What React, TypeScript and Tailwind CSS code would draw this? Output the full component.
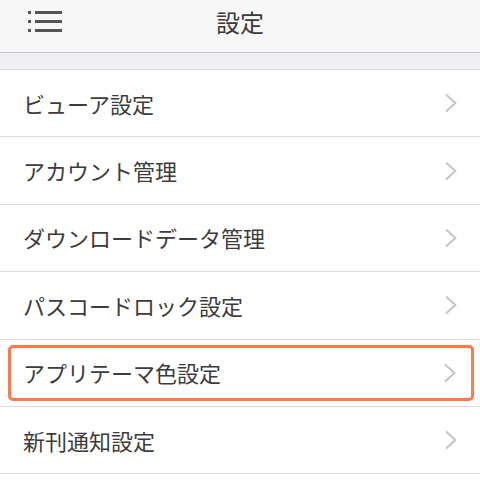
import React from "react";

const items = [
  "ビューア設定",
  "アカウント管理",
  "ダウンロードデータ管理",
  "パスコードロック設定",
  "アプリテーマ色設定",
  "新刊通知設定",
];

function Chevron() {
  return (
    <svg width="14" height="20" viewBox="0 0 14 20" fill="none">
      <path d="M2.5 2 L11.5 10 L2.5 18" stroke="#c4c4c8" strokeWidth="1.9" strokeLinecap="round" strokeLinejoin="round" />
    </svg>
  );
}

export default function App() {
  return (
    <div
      className="w-[480px] h-[481px] bg-white overflow-hidden"
      style={{ fontFamily: '"Noto Sans CJK JP", "Noto Sans", sans-serif' }}
    >
      <div className="relative h-[53px] bg-[#f7f7f7] border-b border-[#c8c8cc] flex justify-center pt-[8px]">
        <div className="absolute left-[28px] top-[11px] flex flex-col gap-[6px]">
          {[0, 1, 2].map((i) => (
            <div key={i} className="flex items-center gap-[4px]">
              <div className="w-[3px] h-[3px] bg-[#555]" />
              <div className="w-[27px] h-[3px] bg-[#555]" />
            </div>
          ))}
        </div>
        <span className="text-[24px] text-[#3a3a3a] leading-[28px]">設定</span>
      </div>
      <div className="h-[17px] bg-[#efeff4] border-b border-[#dcdce0]" />
      <div className="flex flex-col">
        {items.map((t, i) => (
          <div key={t} className="h-[67.4px] border-b border-[#dcdce0] flex">
            {i === 4 ? (
              <div className="flex-1 ml-[8px] mr-[6px] my-[5px] border-[3px] border-[#ff7a4a] rounded-[5px] flex items-center justify-between pl-[12px] pr-[14px]">
                <span className="text-[22px] text-[#3c3c3c]">{t}</span>
                <Chevron />
              </div>
            ) : (
              <div className="flex-1 flex items-center justify-between pl-[23px] pr-[22px]">
                <span className="text-[22px] text-[#3c3c3c]">{t}</span>
                <Chevron />
              </div>
            )}
          </div>
        ))}
      </div>
    </div>
  );
}
